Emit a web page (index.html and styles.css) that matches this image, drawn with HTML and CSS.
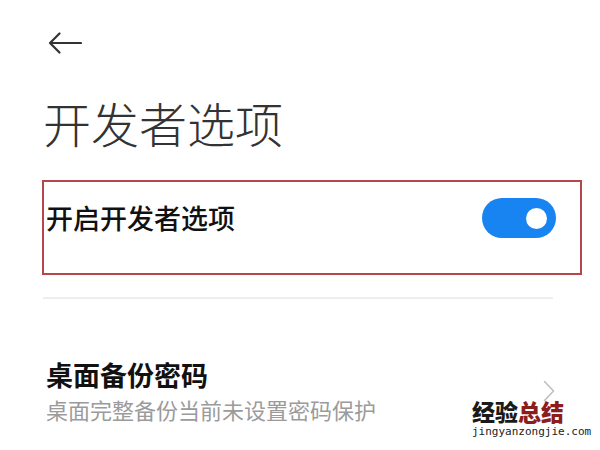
FILE: index.html
```html
<!DOCTYPE html>
<html lang="zh-CN">
<head>
<meta charset="utf-8">
<title>开发者选项</title>
<link rel="stylesheet" href="styles.css">
</head>
<body>
<div class="page">
  <header class="topbar">
    <svg class="back" width="34" height="22" viewBox="0 0 34 22" aria-hidden="true">
      <path d="M33 11 H2 M11.5 1.5 L2 11 L11.5 20.5" fill="none" stroke="#333" stroke-width="2.2" stroke-linecap="round" stroke-linejoin="round"/>
    </svg>
  </header>
  <h1 class="title">开发者选项</h1>
  <div class="highlight">
    <div class="row">
      <span class="row-label">开启开发者选项</span>
      <span class="switch"><span class="knob"></span></span>
    </div>
  </div>
  <div class="divider"></div>
  <div class="item">
    <div class="item-text">
      <div class="item-title">桌面备份密码</div>
      <div class="item-sub">桌面完整备份当前未设置密码保护</div>
    </div>
    <svg class="chev" width="12" height="22" viewBox="0 0 12 22" aria-hidden="true">
      <path d="M1.5 1.5 L10.5 11 L1.5 20.5" fill="none" stroke="#bdbdbd" stroke-width="1.5" stroke-linecap="round" stroke-linejoin="round"/>
    </svg>
  </div>
  <div class="watermark">
    <div class="wm-cn"><span class="wm-dark">经验</span><span class="wm-red">总结</span></div>
    <div class="wm-url">jingyanzongjie.com</div>
  </div>
</div>
</body>
</html>
```
FILE: styles.css
```css
html, body {
  margin: 0;
  padding: 0;
  background: #ffffff;
}
.page {
  position: relative;
  width: 600px;
  height: 450px;
  overflow: hidden;
  font-family: "Noto Sans CJK SC", "Noto Sans", sans-serif;
}
.topbar {
  padding: 32px 0 0 48px;
  height: 22px;
}
.back {
  display: block;
}
.title {
  margin: 44px 0 0 0;
  padding-left: 43px;
  font-size: 48px;
  line-height: 48px;
  font-weight: 300;
  color: #333333;
}
.highlight {
  box-sizing: border-box;
  margin: 34px 0 0 42px;
  width: 540px;
  height: 95px;
  border: 2px solid #b5474a;
}
.row {
  display: flex;
  align-items: center;
  justify-content: space-between;
  padding: 16px 24px 0 2px;
  height: 40px;
}
.row-label {
  font-size: 27px;
  line-height: 40px;
  font-weight: 500;
  color: #111111;
}
.switch {
  display: flex;
  align-items: center;
  justify-content: flex-end;
  box-sizing: border-box;
  width: 74px;
  height: 40px;
  padding-right: 9px;
  border-radius: 20px;
  background: #1784f2;
}
.knob {
  width: 21px;
  height: 21px;
  border-radius: 50%;
  background: #ffffff;
}
.divider {
  margin: 22px 0 0 43px;
  width: 510px;
  height: 2px;
  background: #eeeeee;
}
.item {
  display: flex;
  align-items: center;
  margin-top: 58px;
  padding-left: 46px;
}
.item-text {
  display: flex;
  flex-direction: column;
}
.item-title {
  font-size: 27px;
  line-height: 36px;
  font-weight: 700;
  color: #111111;
}
.item-sub {
  font-size: 22px;
  line-height: 32px;
  color: #9b9b9b;
}
.chev {
  display: block;
  margin-left: auto;
  margin-right: 45px;
}
.watermark {
  position: absolute;
  left: 472px;
  top: 398px;
}
.wm-cn {
  font-size: 23px;
  line-height: 26px;
  font-weight: 900;
  letter-spacing: 0;
}
.wm-dark {
  color: #1a1a1a;
}
.wm-red {
  color: #8c1d1d;
}
.wm-url {
  font-family: "DejaVu Sans Mono", monospace;
  font-size: 11px;
  line-height: 14px;
  color: #222222;
  margin-top: 1px;
}
```
